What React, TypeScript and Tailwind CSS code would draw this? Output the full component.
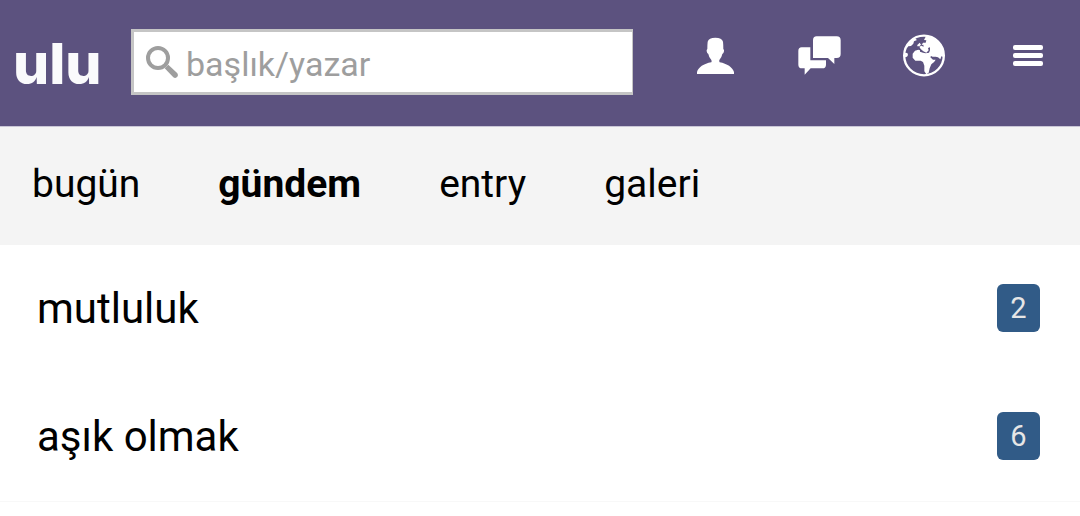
import { FormEvent, useState } from "react";

interface Topic {
  title: string;
  count: number;
}

const tabs = ["bugün", "gündem", "entry", "galeri"];

const topics: Topic[] = [
  { title: "mutluluk", count: 2 },
  { title: "aşık olmak", count: 6 },
];

const SearchIcon = () => (
  <svg viewBox="0 0 96 96" className="w-8 h-8" aria-hidden="true">
    <circle cx="36" cy="36" r="30" fill="none" stroke="#9e9e9e" strokeWidth="12" />
    <path
      d="M56 67 L67 56 L94 82 Q98 89 93 93 Q88 98 82 94 Z"
      fill="#9e9e9e"
    />
  </svg>
);

const PersonIcon = () => (
  <svg viewBox="48 54 111 111" className="w-[37px] h-[37px]" fill="currentColor">
    <path d="M103 56C116 56 124 60 126 68Q127 76 127 90Q130 92 129 97Q128 103 124 105Q122 116 115 123Q114 127 116 130C138 134 155 145 159 159V165H48V159C52 145 68 134 91 130Q93 127 91 123Q84 116 82 105Q78 103 77 97Q76 92 79 90Q79 76 80 68C82 60 90 56 103 56Z" />
  </svg>
);

const ChatIcon = () => (
  <svg viewBox="353 47 129 117" className="w-[43px] h-[39px]" fill="currentColor">
    <path d="M409 48H469Q481 48 481 60V101Q481 113 469 113H462V131L443 113H398V60Q398 48 409 48Z" />
    <path d="M364 81H390V120H437V133Q437 144 426 144H391L373 163V144H365Q354 144 354 133V92Q354 81 364 81Z" />
  </svg>
);

const EarthIcon = () => (
  <svg viewBox="69 42 126 129" className="w-[42px] h-[43px]" fill="currentColor">
    <circle cx="132" cy="106.500" r="59.500" fill="none" stroke="currentColor" strokeWidth="7" />
    <path d="M80 77Q88 61 104 55L111 60L102 64L100 71L93 78L85 79L79 86Z" />
    <path d="M74 98L82 99L84 105L81 110L74 112Z" />
    <path d="M138 48C170 52 192 78 192 112L184 109L181 118L174 112L167 110L158 110L153 108L151 112L159 119H167Q163 127 154 133L149 145L146 158L139 163L133 154V137L129 126L122 122H106L98 113V101L105 92L115 89L120 91V95L129 98L137 100L147 98L150 91V82L144 84L146 91L139 98L130 94L122 87L118 80L124 77L131 80L130 74L125 75L129 68L137 68L139 61L132 60Z" />
    <path d="M112 75L119 68L123 74L118 79H112Z" />
  </svg>
);

const MenuIcon = () => (
  <svg viewBox="0 0 30 22" className="w-[30px] h-[22px]" fill="currentColor">
    <rect y="0" width="30" height="5" rx="2" />
    <rect y="8" width="30" height="5" rx="2" />
    <rect y="16" width="30" height="5" rx="2" />
  </svg>
);

const actions = [
  { label: "profil", Icon: PersonIcon },
  { label: "mesajlar", Icon: ChatIcon },
  { label: "olaylar", Icon: EarthIcon },
  { label: "menü", Icon: MenuIcon },
];

const Header = () => {
  const [query, setQuery] = useState<string>("");
  const handleSubmit = (e: FormEvent<HTMLFormElement>) => {
    e.preventDefault();
  };
  return (
    <header className="flex items-start bg-[#5c527f] border-b border-[#c9c6d6] h-[127px]">
      <a
        href="#"
        className="w-[131px] shrink-0 pl-[13px] pt-[34px] font-[Inter,sans-serif] font-extrabold text-[57px] leading-[60px] text-[#fafafc]"
      >
        ulu
      </a>
      <form
        onSubmit={handleSubmit}
        className="flex flex-1 min-w-0 items-center gap-2 mt-[29px] mr-[30px] h-[66px] pl-3 bg-white border-3 border-r border-[#c5c5c5]"
      >
        <label htmlFor="search" className="shrink-0">
          <SearchIcon />
        </label>
        <input
          type="text"
          id="search"
          aria-label="başlık/yazar"
          placeholder="başlık/yazar"
          className="w-full min-w-0 pt-1 text-[34px] leading-[48px] text-black placeholder:text-[#9e9e9e] outline-none"
          value={query}
          onChange={(e) => setQuery(e.target.value)}
        />
      </form>
      <nav className="grid grid-cols-4 w-[38.6%] h-[111px] text-white">
        {actions.map(({ label, Icon }) => (
          <button
            key={label}
            type="button"
            aria-label={label}
            className="flex items-center justify-center"
          >
            <Icon />
          </button>
        ))}
      </nav>
    </header>
  );
};

const App = () => {
  const [active, setActive] = useState<string>("gündem");
  return (
    <div className="bg-white text-black font-[Roboto,sans-serif]">
      <Header />
      <nav className="flex items-center gap-[78px] h-[118px] px-8 pb-1 bg-[#f4f4f4] text-[39px] leading-[48px]">
        {tabs.map((tab) => (
          <button
            key={tab}
            type="button"
            className={tab === active ? "font-bold" : "font-normal"}
            onClick={() => setActive(tab)}
          >
            {tab}
          </button>
        ))}
      </nav>
      <ul className="border-b border-[#f8f8f8]">
        {topics.map((topic) => (
          <li key={topic.title}>
            <a
              href="#"
              className="flex items-center justify-between h-32 pl-[37px] pr-10 text-[42px] leading-[50px]"
            >
              <span>{topic.title}</span>
              <span className="flex items-center justify-center w-[43px] h-12 mb-0.5 rounded-md bg-[#315b87] text-[29px] leading-[36px] text-[#e6e6e6]">
                {topic.count}
              </span>
            </a>
          </li>
        ))}
      </ul>
    </div>
  );
};

export default App;
